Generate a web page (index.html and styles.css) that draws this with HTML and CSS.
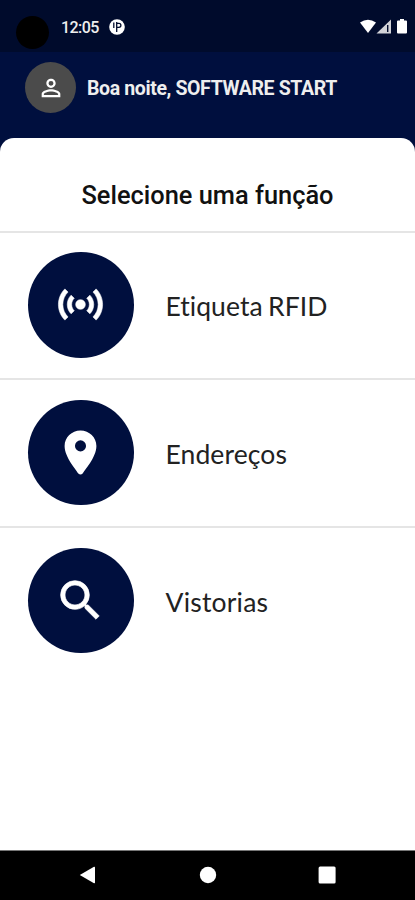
FILE: index.html
```html
<!DOCTYPE html>
<html lang="pt-BR">
<head>
<meta charset="utf-8">
<title>Selecione uma função</title>
<link rel="stylesheet" href="styles.css">
</head>
<body>
<div class="app">
  <div class="status">
    <span class="camera"></span>
    <span class="clock">12:05</span>
    <svg class="notice" viewBox="0 0 16 16"><circle cx="8" cy="8" r="7.8" fill="#fff"/><path d="M4.800 3.500v5.500M7.700 3v10M7.700 4.300h2.200a2 2 0 0 1 0 4H7.700" fill="none" stroke="#000b2c" stroke-width="1.3"/></svg>
    <svg class="signals" viewBox="0 0 48 16">
      <path d="M0 3.5Q8 -2 16 3.5L8 14z" fill="#fff"/>
      <path d="M16.500 14.500L31 .5v14z" fill="#d2d3d8"/><path d="M27.700 6v7" stroke="#000b2c" stroke-width="1.4"/>
      <path d="M40 0h4v1.500h2q1 0 1 1v11q0 1-1 1h-8q-1 0-1-1v-11q0-1 1-1h2z" fill="#fff"/>
    </svg>
  </div>
  <header class="header">
    <span class="avatar"><svg viewBox="0 0 24 24"><path d="M12 5.9a2.1 2.1 0 1 1 0 4.2 2.1 2.1 0 0 1 0-4.2m0 9c2.97 0 6.1 1.46 6.1 2.1v1.1H5.9V17c0-.64 3.13-2.1 6.1-2.1M12 4C9.79 4 8 5.79 8 8s1.79 4 4 4 4-1.79 4-4-1.79-4-4-4zm0 9c-2.67 0-8 1.34-8 4v3h16v-3c0-2.66-5.33-4-8-4z"/></svg></span>
    <span class="greeting">Boa noite, SOFTWARE START</span>
  </header>
  <main class="panel">
    <h1 class="title">Selecione uma função</h1>
    <div class="row">
      <span class="disc"><svg viewBox="0 0 24 24"><path d="M7.76 16.24C6.67 15.16 6 13.66 6 12s.67-3.16 1.76-4.24l1.42 1.42C8.45 9.9 8 10.9 8 12s.45 2.1 1.17 2.83zm8.48 0C17.33 15.16 18 13.66 18 12s-.67-3.16-1.76-4.24l-1.42 1.42C15.55 9.9 16 10.9 16 12s-.45 2.1-1.17 2.83zM12 9.8a2.2 2.2 0 1 0 0 4.4 2.2 2.2 0 0 0 0-4.4zM22 12c0 2.76-1.12 5.26-2.93 7.07l-1.42-1.42C19.1 16.21 20 14.21 20 12s-.9-4.21-2.35-5.65l1.42-1.42C20.88 6.74 22 9.24 22 12zM6.35 6.35 4.93 4.93C3.12 6.74 2 9.24 2 12s1.12 5.26 2.93 7.07l1.42-1.42C4.9 16.21 4 14.21 4 12s.9-4.21 2.35-5.65z" stroke="#fff" stroke-width=".25"/></svg></span>
      <span class="label rfid">Etiqueta RFID</span>
    </div>
    <div class="row">
      <span class="disc"><svg viewBox="0 0 24 24"><path d="M12 2C8 2 4.800 5.130 4.800 9c0 5.250 5.700 11.300 6.200 12.500q1 1 2 0C13.500 20.300 19.200 14.250 19.200 9c0-3.870-3.200-7-7.200-7zm0 9.500a2.500 2.500 0 0 1 0-5 2.500 2.500 0 0 1 0 5z"/></svg></span>
      <span class="label places">Endereços</span>
    </div>
    <div class="row">
      <span class="disc"><svg viewBox="0 0 24 24"><path d="M15.500 14h-.79l-.28-.27A6.471 6.471 0 0 0 16 9.500 6.500 6.500 0 1 0 9.500 16c1.610 0 3.090-.59 4.230-1.570l.27.28v.79l5 4.990L20.490 19l-4.990-5zm-6 0C7.010 14 5 11.990 5 9.500S7.010 5 9.500 5 14 7.010 14 9.500 11.990 14 9.500 14z" stroke="#fff" stroke-width=".3"/></svg></span>
      <span class="label surveys">Vistorias</span>
    </div>
  </main>
  <nav class="nav">
    <svg viewBox="0 0 18 18"><path d="M.8 9 15 .7q1-.3 1 .7v15.200q0 1-1 .7z"/></svg>
    <svg viewBox="0 0 18 18"><circle cx="9" cy="9" r="8.200"/></svg>
    <svg viewBox="0 0 18 18"><rect x=".6" y=".6" width="17" height="17" rx="1.500"/></svg>
  </nav>
</div>
</body>
</html>
```
FILE: styles.css
```css
* { box-sizing: border-box; }
body { margin: 0; background: #000f3e; }
.app {
  width: 415px; height: 900px; overflow: hidden;
  display: flex; flex-direction: column;
  font-family: Roboto, sans-serif; background: #000f3e;
}
svg { display: block; flex: none; fill: #fff; }
.status {
  height: 52px; flex: none; background: #000b2c;
  display: flex; align-items: flex-start; padding: 0 7px 0 16px;
}
.camera { width: 33px; height: 33px; margin-top: 16px; border-radius: 50%; background: #000; }
.clock {
  width: 38px; margin: 18px 0 0 12px; color: #eee;
  font-size: 16px; line-height: 19px; font-weight: 500; letter-spacing: -.55px;
}
.notice { width: 16px; height: 16px; margin: 19px 0 0 10px; }
.signals { width: 48px; height: 16px; margin: 19px 0 0 auto; }
.header { height: 85.500px; flex: none; padding: 10px 25px; display: flex; align-items: flex-start; }
.avatar {
  width: 51px; height: 51px; border-radius: 50%; background: #4b4b4b;
  display: flex; align-items: center; justify-content: center;
}
.avatar svg { width: 28px; height: 28px; }
.greeting {
  margin: 15px 0 0 11px; white-space: nowrap; color: #eee;
  font-size: 19.500px; line-height: 23px; font-weight: 700; letter-spacing: -.38px;
}
.panel { flex: 1; background: #fff; border-radius: 14px 14px 0 0; }
.title {
  margin: 0; height: 93px; padding-top: 42px; text-align: center;
  color: #111; font-size: 25.400px; line-height: 31px; font-weight: 500;
}
.row { height: 147.800px; border-top: 2px solid #e5e5e5; display: flex; align-items: center; padding: 0 0 1px 28px; }
.disc {
  width: 105.500px; height: 105.500px; border-radius: 50%; background: #000f3e;
  display: flex; align-items: center; justify-content: center;
}
.disc svg { width: 53px; height: 53px; }
.label {
  margin: 3px 0 0 32px; font-family: Lato, sans-serif; font-size: 26.500px; line-height: 32px;
  font-variant-ligatures: none; color: #222; white-space: nowrap;
}
.rfid { word-spacing: -1.500px; letter-spacing: .05px; }
.places { letter-spacing: .1px; }
.surveys { letter-spacing: .2px; }
.nav {
  height: 50px; flex: none; background: #000; border-top: 1px solid #777;
  display: flex; justify-content: space-between; padding: 15px 79px 0;
}
.nav svg { width: 18px; height: 18px; }
```
